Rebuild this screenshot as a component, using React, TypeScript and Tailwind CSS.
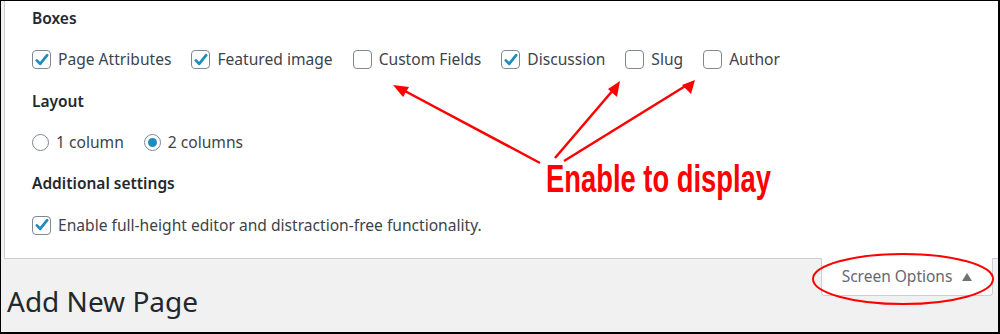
import React from "react";

const font = { fontFamily: '"Noto Sans", "Open Sans", sans-serif' };

function CheckBox({ checked }: { checked: boolean }) {
  return (
    <span className="flex h-[19px] w-[19px] shrink-0 items-center justify-center rounded-[4px] border border-[#7e8993] bg-white">
      {checked && (
        <svg width="16" height="16" viewBox="0 0 20 20">
          <path d="M3.5 10.5l4.2 4.4L16.5 4" fill="none" stroke="#1e8cbe" strokeWidth="3.4" strokeLinecap="round" strokeLinejoin="round" />
        </svg>
      )}
    </span>
  );
}

function Radio({ checked }: { checked: boolean }) {
  return (
    <span className="flex h-[17px] w-[17px] shrink-0 items-center justify-center rounded-full border border-[#7e8993] bg-white">
      {checked && <span className="h-[9px] w-[9px] rounded-full bg-[#1e8cbe]" />}
    </span>
  );
}

function Option({ label, checked, radio }: { label: string; checked: boolean; radio?: boolean }) {
  return (
    <label className="flex items-center gap-[7px] text-[15.6px] text-[#3c434a]">
      {radio ? <Radio checked={checked} /> : <CheckBox checked={checked} />}
      <span>{label}</span>
    </label>
  );
}

const boxes = [
  { label: "Page Attributes", checked: true },
  { label: "Featured image", checked: true },
  { label: "Custom Fields", checked: false },
  { label: "Discussion", checked: true },
  { label: "Slug", checked: false },
  { label: "Author", checked: false },
];

export default function App() {
  return (
    <div
      className="relative flex h-[334px] w-[1000px] flex-col overflow-hidden border-t border-l border-r-2 border-b-2 border-black bg-[#f1f1f1]"
      style={font}
    >
      {/* Screen options panel */}
      <div className="ml-[3px] h-[258px] border-l border-b border-[#ccd0d4] bg-white pl-[27px]">
        <h5 className="pt-[6px] text-[15.5px] font-semibold text-[#23282d]">Boxes</h5>
        <div className="mt-[18px] flex gap-[20px]">
          {boxes.map((b) => (
            <Option key={b.label} label={b.label} checked={b.checked} />
          ))}
        </div>
        <h5 className="mt-[18px] text-[15.5px] font-semibold text-[#23282d]">Layout</h5>
        <div className="mt-[18px] flex gap-[20px]">
          <Option label="1 column" checked={false} radio />
          <Option label="2 columns" checked radio />
        </div>
        <h5 className="mt-[18px] text-[15.5px] font-semibold text-[#23282d]">Additional settings</h5>
        <div className="mt-[18px] flex">
          <Option label="Enable full-height editor and distraction-free functionality." checked />
        </div>
      </div>

      {/* Title row + Screen Options tab */}
      <div className="flex items-start justify-between">
        <h1 className="mt-[28px] pl-[6px] text-[28px] leading-none text-[#23282d]">Add New Page</h1>
        <div className="mr-[5px] -mt-px flex h-[38px] w-[172px] items-center justify-center gap-[10px] rounded-b-[4px] border border-t-0 border-[#ccd0d4] bg-white text-[15.5px] text-[#646970]">
          <span>Screen Options</span>
          <svg width="10" height="8" viewBox="0 0 10 8">
            <path d="M0 8L5 0l5 8z" fill="#6d7378" />
          </svg>
        </div>
      </div>

      {/* Annotation */}
      <div
        className="absolute left-[545px] top-[159px] origin-left scale-x-[0.72] text-[38px] font-bold leading-none text-[#ff0000] whitespace-nowrap"
        style={{ fontFamily: '"Liberation Sans", Arial, sans-serif' }}
      >
        Enable to display
      </div>
      <svg className="pointer-events-none absolute left-0 top-0" width="1000" height="334">
        <g stroke="#ff0000" strokeWidth="2.5" fill="none">
          <line x1="539" y1="162" x2="402" y2="89" />
          <line x1="554" y1="157" x2="613" y2="88" />
          <line x1="563" y1="160" x2="686" y2="84" />
          <ellipse cx="902" cy="278" rx="90" ry="25" strokeWidth="2" />
        </g>
        <g fill="#ff0000">
          <polygon points="392,84 408,86 402,96" />
          <polygon points="619,80 616,96 607,88" />
          <polygon points="694,79 690,93 681,84" />
        </g>
      </svg>
    </div>
  );
}
